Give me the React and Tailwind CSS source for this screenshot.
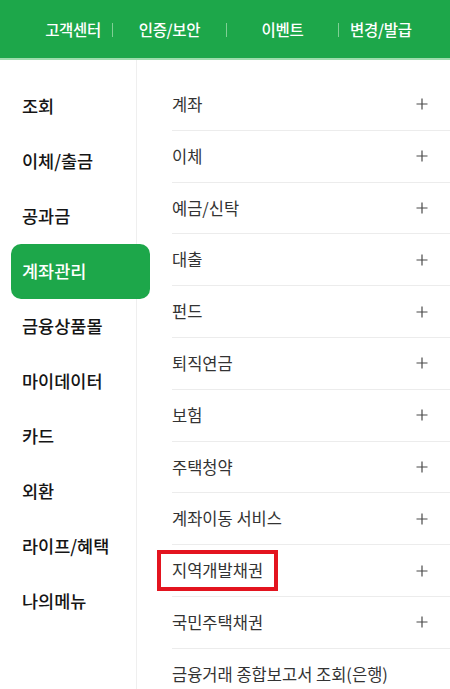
import React from "react";

const left = ["조회", "이체/출금", "공과금", "계좌관리", "금융상품몰", "마이데이터", "카드", "외환", "라이프/혜택", "나의메뉴"];
const right = ["계좌", "이체", "예금/신탁", "대출", "펀드", "퇴직연금", "보험", "주택청약", "계좌이동 서비스", "지역개발채권", "국민주택채권", "금융거래 종합보고서 조회(은행)"];

function Plus() {
  return (
    <svg width="12" height="12" viewBox="0 0 12 12" className="shrink-0">
      <path d="M6 0.5V11.5M0.5 6H11.5" stroke="#4a4a4a" strokeWidth="1.2" />
    </svg>
  );
}

function Sep() {
  return <span className="block h-[14px] w-px bg-[#7fcf95]" />;
}

export default function App() {
  return (
    <div className="h-[689px] w-[450px] overflow-hidden bg-white" style={{ fontFamily: '"Noto Sans CJK KR", "Noto Sans", sans-serif' }}>
      <header className="flex h-[58px] items-center bg-[#1da74a] pt-[2px] text-[15.5px] font-medium tracking-[-0.3px] text-white">
        <div className="flex w-[112px] justify-end pr-[11px]">고객센터</div>
        <Sep />
        <div className="flex w-[113px] justify-center">인증/보안</div>
        <Sep />
        <div className="flex w-[111px] justify-center">이벤트</div>
        <Sep />
        <div className="flex flex-1 justify-start pl-[11px]">변경/발급</div>
      </header>
      <div className="h-[2px] bg-[#9edcad]" />
      <div className="flex h-[629px]">
        <nav className="w-[137px] shrink-0 border-r border-[#efefef] pt-[19px]">
          {left.map((t) => {
            const active = t === "계좌관리";
            return active ? (
              <div key={t} className="relative z-10 ml-[11px] flex h-[55px] w-[139px] items-center rounded-[10px] bg-[#1da74a] pl-[11px] text-[17.5px] font-medium text-white">
                {t}
              </div>
            ) : (
              <div key={t} className="flex h-[55px] items-center pl-[22px] text-[17.5px] font-medium text-[#151515]">
                {t}
              </div>
            );
          })}
        </nav>
        <section className="flex-1 pl-[35px] pt-[19px]">
          {right.map((t) => (
            <div key={t} className="relative flex h-[51.8px] items-center justify-between border-b border-[#ececec] pr-[22px] text-[16.5px] text-[#333333]">
              <span>{t}</span>
              {t !== right[right.length - 1] && <Plus />}
              {t === "지역개발채권" && (
                <div className="absolute left-[-15px] top-[5px] h-[41px] w-[121px] border-[4px] border-[#e3141f]" />
              )}
            </div>
          ))}
        </section>
      </div>
    </div>
  );
}
